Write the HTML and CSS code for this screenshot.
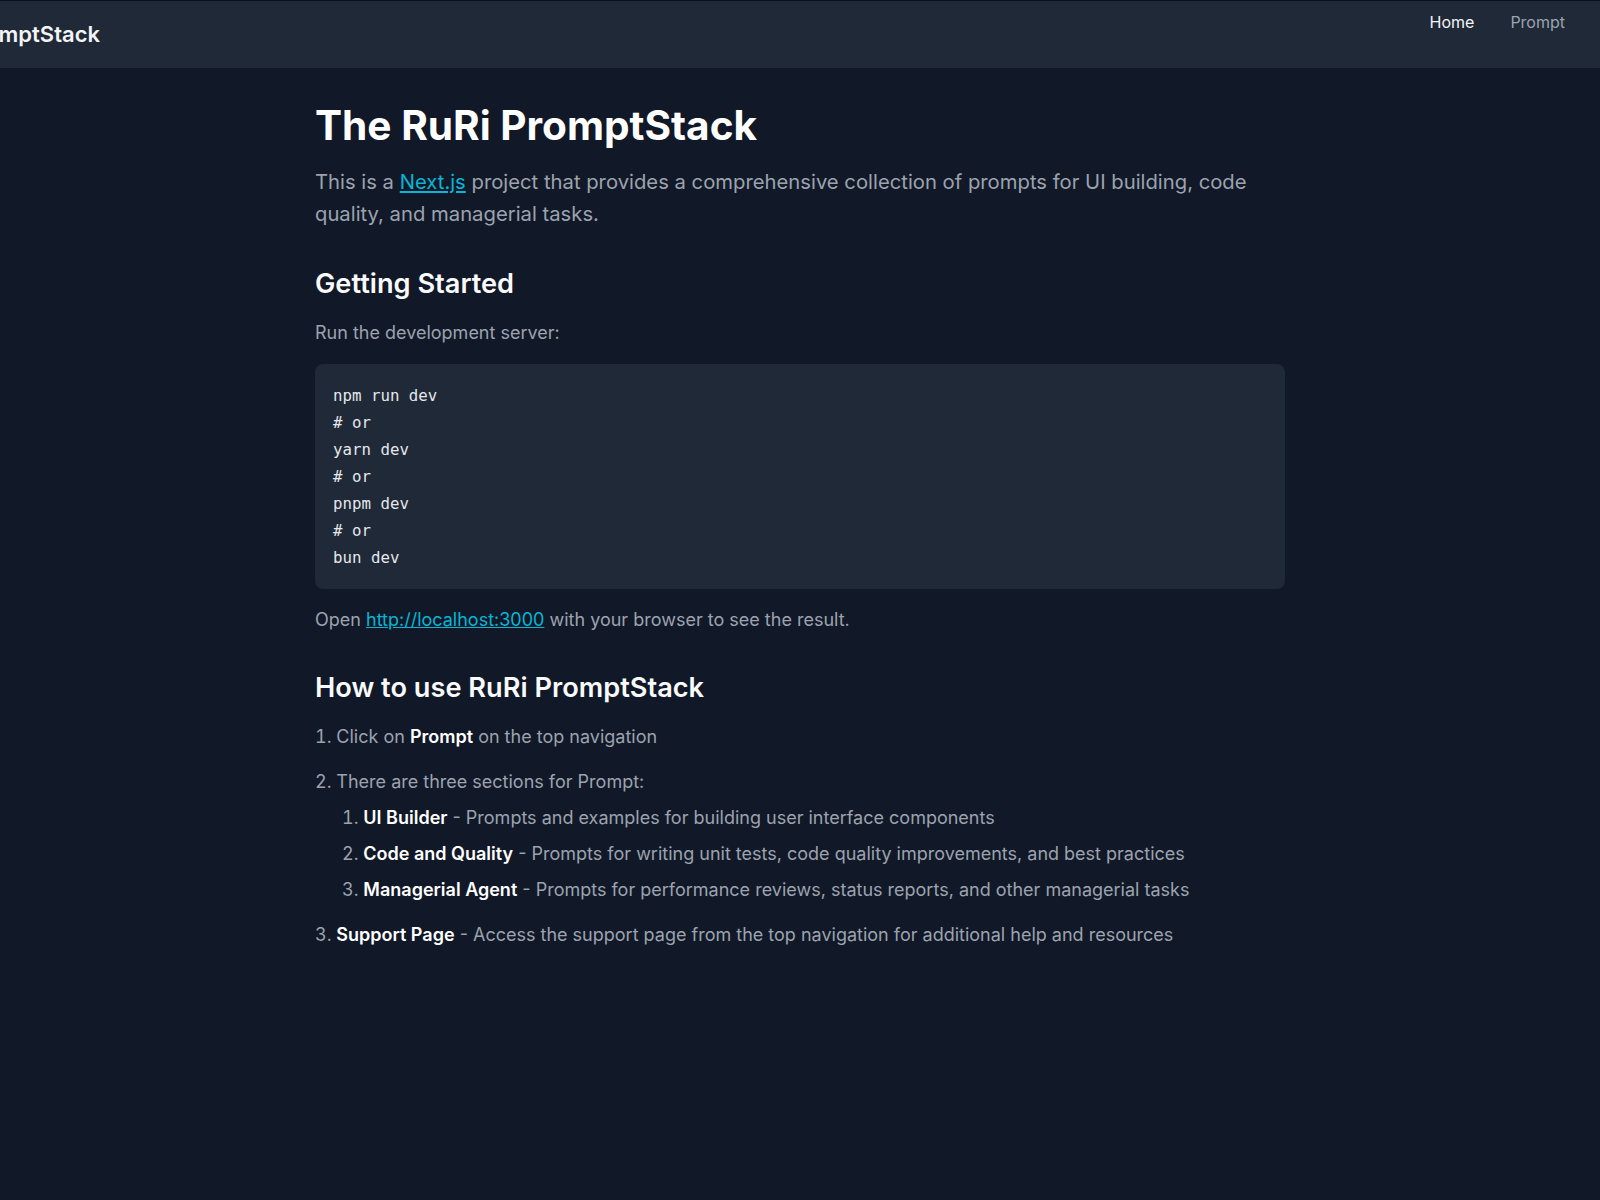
FILE: index.html
```html
<!DOCTYPE html>
<html lang="en">
<head>
<meta charset="utf-8">
<title>RuRi PromptStack</title>
<link rel="stylesheet" href="styles.css">
</head>
<body>
<header class="topbar">
  <div class="brand"><span class="brand-text">RuRi PromptStack</span></div>
  <nav class="nav">
    <a class="nav-link active" href="#">Home</a>
    <a class="nav-link" href="#">Prompt</a>
  </nav>
</header>
<main class="content">
  <h1 class="title">The RuRi PromptStack</h1>
  <p class="lead">This is a <a class="link" href="#">Next.js</a> project that provides a comprehensive collection of prompts for UI building, code quality, and managerial tasks.</p>

  <h2 class="section">Getting Started</h2>
  <p class="text">Run the development server:</p>
  <pre class="code"><code>npm run dev
# or
yarn dev
# or
pnpm dev
# or
bun dev</code></pre>
  <p class="text">Open <a class="link" href="#">http://localhost:3000</a> with your browser to see the result.</p>

  <h2 class="section section-2">How to use RuRi PromptStack</h2>
  <ol class="steps">
    <li class="step">Click on <strong>Prompt</strong> on the top navigation</li>
    <li class="step">There are three sections for Prompt:
      <ol class="substeps">
        <li class="substep"><strong>UI Builder</strong> - Prompts and examples for building user interface components</li>
        <li class="substep"><strong>Code and Quality</strong> - Prompts for writing unit tests, code quality improvements, and best practices</li>
        <li class="substep"><strong>Managerial Agent</strong> - Prompts for performance reviews, status reports, and other managerial tasks</li>
      </ol>
    </li>
    <li class="step"><strong>Support Page</strong> - Access the support page from the top navigation for additional help and resources</li>
  </ol>
</main>
</body>
</html>
```

FILE: styles.css
```css
* { box-sizing: border-box; }
html, body { margin: 0; padding: 0; }
body {
  background: #111827;
  font-family: Inter, "Noto Sans", sans-serif;
  color: #9ca3af;
  min-height: 1200px;
}
.topbar {
  display: flex;
  justify-content: space-between;
  align-items: flex-start;
  height: 68px;
  background: #1f2937;
  border-top: 1px solid #0b0f18;
}
.brand {
  width: 100px;
  height: 66px;
  display: flex;
  justify-content: flex-end;
  align-items: center;
}
.brand-text {
  white-space: nowrap;
  flex-shrink: 0;
  color: #f3f4f6;
  font-size: 22px;
  font-weight: 600;
}
.nav {
  display: flex;
  gap: 36px;
  padding: 11px 35px 0 0;
}
.nav-link {
  text-decoration: none;
  font-size: 16px;
  color: #9ca3af;
  font-weight: 400;
}
.nav-link.active { color: #f3f4f6; }
.content {
  width: 970px;
  margin: 0 auto;
  padding-top: 34px;
  font-size: 18px;
}
.title {
  margin: 0;
  color: #ffffff;
  font-size: 40.6px;
  font-weight: 700;
  line-height: 48px;
}
.lead {
  margin: 16px 0 0;
  font-size: 20.25px;
  line-height: 32px;
}
.link { color: #06b6d4; text-decoration: underline; }
.section {
  margin: 36px 0 0;
  color: #f9fafb;
  font-size: 27.2px;
  font-weight: 600;
  line-height: 36px;
}
.section-2 { margin-top: 36px; }
.text {
  margin: 17px 0 0;
  line-height: 28px;
}
.code {
  margin: 17px 0 0;
  background: #1f2937;
  border-radius: 8px;
  padding: 18px 18px 18px;
  font-family: "DejaVu Sans Mono", monospace;
  font-size: 15.75px;
  line-height: 27px;
  color: #e5e7eb;
}
.code + .text { margin-top: 17px; }
.steps {
  margin: 17px 0 0;
  padding: 0;
  list-style: decimal inside;
}
.step { line-height: 28px; margin-top: 17px; }
.step:first-child { margin-top: 0; }
.substeps {
  margin: 8px 0 0;
  padding-left: 27px;
  list-style: decimal inside;
}
.substep { margin-top: 8px; line-height: 28px; }
.substep:first-child { margin-top: 0; }
strong { color: #ffffff; font-weight: 600; }
```
